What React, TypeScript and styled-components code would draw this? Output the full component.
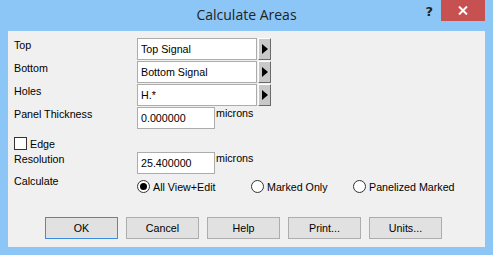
import styled, { createGlobalStyle } from "styled-components";

const GlobalStyle = createGlobalStyle`
  html, body {
    margin: 0;
    padding: 0;
    background: #8cc6f7;
  }
  body {
    font-family: "Liberation Sans", Arial, sans-serif;
    font-size: 10.7px;
    color: #000;
  }
`;

const Window = styled.div`
  width: 493px;
  height: 255px;
  background: #8cc6f7;
  display: flex;
  flex-direction: column;
  box-sizing: border-box;
  padding: 0 8px 8px 8px;
`;

const TitleBar = styled.div`
  height: 31px;
  display: flex;
  align-items: flex-start;
  position: relative;
`;

const Title = styled.div`
  position: absolute;
  left: 0;
  right: 0;
  top: 5px;
  text-align: center;
  font-family: "Open Sans", "Noto Sans", sans-serif;
  font-size: 14px;
  color: #222;
`;

const Controls = styled.div`
  margin-left: auto;
  display: flex;
  align-items: flex-start;
  gap: 8px;
  z-index: 1;
`;

const HelpGlyph = styled.div`
  font-family: "DejaVu Sans", sans-serif;
  font-weight: bold;
  font-size: 13px;
  color: #222;
  margin-top: 4px;
`;

const CloseButton = styled.div`
  width: 44px;
  height: 21px;
  background: #c75050;
  color: #fff;
  display: flex;
  align-items: center;
  justify-content: center;
`;

const Client = styled.div`
  flex: 1;
  background: #f0f0f0;
  padding: 7px 6px 0 6px;
  display: flex;
  flex-direction: column;
`;

const FieldRows = styled.div`
  display: flex;
  flex-direction: column;
  gap: 1px;
`;

const Row = styled.div<{ $mt?: number; $h?: number }>`
  display: grid;
  grid-template-columns: 123px auto 1fr;
  align-items: start;
  height: ${(p) => p.$h ?? 22}px;
  margin-top: ${(p) => p.$mt ?? 0}px;
`;

const Label = styled.div`
  line-height: 13px;
  padding-top: 1px;
  white-space: nowrap;
`;

const Combo = styled.div`
  display: flex;
  gap: 1px;
`;

const TextBox = styled.div<{ $w: number }>`
  width: ${(p) => p.$w}px;
  height: 22px;
  box-sizing: border-box;
  background: #fff;
  border: 1px solid #acacac;
  padding: 4px 0 0 3px;
  line-height: 13px;
  white-space: nowrap;
`;

const ArrowButton = styled.div`
  width: 13px;
  height: 22px;
  box-sizing: border-box;
  background: #c8c8c8;
  border-top: 1px solid #fff;
  border-left: 1px solid #fff;
  border-right: 1px solid #6a6a6a;
  border-bottom: 1px solid #6a6a6a;
  display: flex;
  align-items: center;
  justify-content: center;
`;

const Unit = styled.div`
  line-height: 13px;
  margin-left: 1px;
`;

const CheckRow = styled.div`
  display: flex;
  align-items: center;
  gap: 3px;
  margin-top: 8px;
  height: 13px;
`;

const CheckBox = styled.div`
  width: 13px;
  height: 13px;
  box-sizing: border-box;
  border: 1px solid #333;
  background: #fff;
`;

const RadioGroup = styled.div`
  display: flex;
  margin-top: 6px;
`;

const RadioItem = styled.div<{ $w: number }>`
  width: ${(p) => p.$w}px;
  display: flex;
  align-items: center;
  gap: 3px;
  white-space: nowrap;
`;

const RadioCircle = styled.div<{ $on?: boolean }>`
  width: 13px;
  height: 13px;
  box-sizing: border-box;
  border-radius: 50%;
  border: 1px solid #333;
  background: #fff;
  display: flex;
  align-items: center;
  justify-content: center;

  &::after {
    content: "";
    width: 7px;
    height: 7px;
    border-radius: 50%;
    background: #000;
    display: ${(p) => (p.$on ? "block" : "none")};
  }
`;

const ButtonBar = styled.div`
  display: flex;
  gap: 8px;
  margin-top: 23px;
  padding-left: 31px;
`;

const Button = styled.div<{ $default?: boolean }>`
  flex: 0 0 73px;
  height: 22px;
  box-sizing: border-box;
  background: #e1e1e1;
  border: 1px solid ${(p) => (p.$default ? "#3c8ce0" : "#adadad")};
  display: flex;
  align-items: center;
  justify-content: center;
`;

const Triangle = () => (
  <svg width="6" height="10" viewBox="0 0 6 10">
    <path d="M0 0 L6 5 L0 10 Z" fill="#000" />
  </svg>
);

const fields = [
  { label: "Top", value: "Top Signal" },
  { label: "Bottom", value: "Bottom Signal" },
  { label: "Holes", value: "H.*" },
];

export default function App() {
  return (
    <>
      <GlobalStyle />
      <Window>
        <TitleBar>
          <Title>Calculate Areas</Title>
          <Controls>
            <HelpGlyph>?</HelpGlyph>
            <CloseButton>
              <svg width="10" height="9" viewBox="0 0 10 9">
                <path d="M1 0.5 L9 8.5 M9 0.5 L1 8.5" stroke="#fff" strokeWidth="2" />
              </svg>
            </CloseButton>
          </Controls>
        </TitleBar>
        <Client>
          <FieldRows>
            {fields.map((f) => (
              <Row key={f.label}>
                <Label>{f.label}</Label>
                <Combo>
                  <TextBox $w={120}>{f.value}</TextBox>
                  <ArrowButton>
                    <Triangle />
                  </ArrowButton>
                </Combo>
              </Row>
            ))}
            <Row>
              <Label>Panel Thickness</Label>
              <TextBox $w={78}>0.000000</TextBox>
              <Unit>microns</Unit>
            </Row>
          </FieldRows>
          <CheckRow>
            <CheckBox />
            <span>Edge</span>
          </CheckRow>
          <Row $mt={2}>
            <Label>Resolution</Label>
            <TextBox $w={78}>25.400000</TextBox>
            <Unit>microns</Unit>
          </Row>
          <Row $h={20}>
            <Label>Calculate</Label>
            <RadioGroup>
              <RadioItem $w={114}>
                <RadioCircle $on />
                All View+Edit
              </RadioItem>
              <RadioItem $w={102}>
                <RadioCircle />
                Marked Only
              </RadioItem>
              <RadioItem $w={110}>
                <RadioCircle />
                Panelized Marked
              </RadioItem>
            </RadioGroup>
          </Row>
          <ButtonBar>
            <Button $default>OK</Button>
            <Button>Cancel</Button>
            <Button>Help</Button>
            <Button>Print...</Button>
            <Button>Units...</Button>
          </ButtonBar>
        </Client>
      </Window>
    </>
  );
}
